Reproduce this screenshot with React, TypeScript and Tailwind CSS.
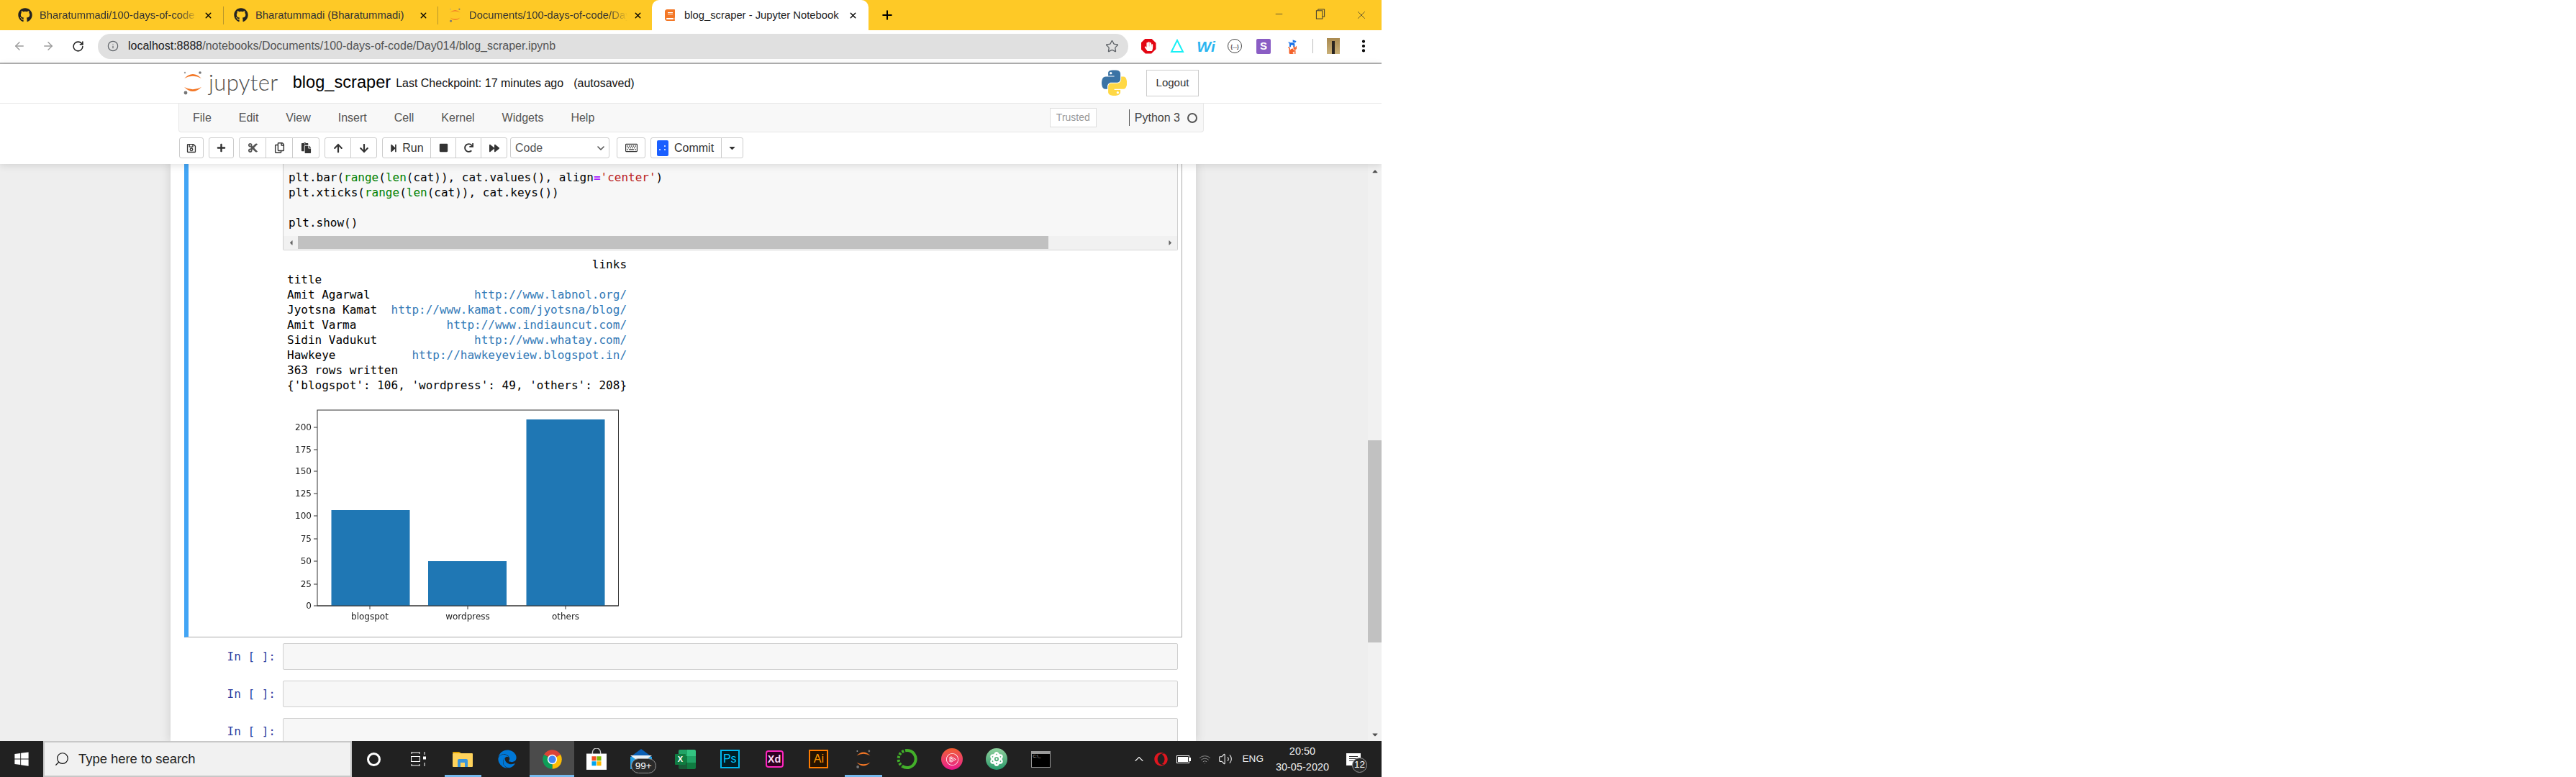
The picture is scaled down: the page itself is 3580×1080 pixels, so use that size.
import React from 'react';
import {
  ArrowLeft,
  ArrowRight,
  RotateCw,
  Info,
  Star,
  EllipsisVertical,
  Plus,
  Minus,
  X,
  Search,
  ChevronUp,
  ChevronDown,
  Wifi,
  Volume2,
} from 'lucide-react';
import {
  FaGithub,
  FaRegSave,
  FaPlus,
  FaCut,
  FaRegCopy,
  FaPaste,
  FaArrowUp,
  FaArrowDown,
  FaStepForward,
  FaStop,
  FaRedo,
  FaForward,
  FaRegKeyboard,
  FaCaretDown,
  FaWindows,
  FaEdge,
  FaOpera,
  FaHandPaper,
  FaCat,
  FaDog,
  FaAtom,
  FaBook,
  FaCaretUp,
  FaCaretLeft,
  FaCaretRight,
} from 'react-icons/fa';
import { SiPluralsight } from 'react-icons/si';

const mono = "[font-family:'DejaVu_Sans_Mono',monospace]";

function JupyterLogo({ className }: { className?: string }) {
  return (
    <svg viewBox="0 0 28 34" className={className}>
      <path d="M2 11 Q14 -1 26 11 Q14 4.5 2 11Z" fill="#f37726" />
      <path d="M2 23 Q14 35 26 23 Q14 29.5 2 23Z" fill="#f37726" />
      <circle cx="24" cy="3" r="1.8" fill="#767677" />
      <circle cx="4" cy="31" r="2.4" fill="#767677" />
      <circle cx="3" cy="3" r="1.2" fill="#9e9e9e" />
    </svg>
  );
}

function PythonLogo() {
  return (
    <svg viewBox="0 0 110.4 110.4" className="h-[36px] w-[35px]">
      <path
        fill="#3a73a5"
        d="M54.919 0c-4.584.022-8.961.413-12.813 1.095C30.76 3.099 28.7 7.295 28.7 15.032v10.219h26.813v3.406H18.638c-7.793 0-14.616 4.684-16.75 13.594-2.462 10.213-2.571 16.586 0 27.25 1.905 7.938 6.457 13.594 14.25 13.594h9.219v-12.25c0-8.85 7.657-16.656 16.75-16.656h26.782c7.454 0 13.406-6.138 13.406-13.625v-25.532c0-7.266-6.13-12.725-13.406-13.937C64.282.328 59.502-.02 54.918 0zm-14.5 8.22c2.77 0 5.031 2.298 5.031 5.125 0 2.816-2.262 5.093-5.031 5.093-2.78 0-5.031-2.277-5.031-5.093 0-2.827 2.251-5.125 5.03-5.125z"
      />
      <path
        fill="#ffd845"
        d="M85.638 28.657v11.906c0 9.231-7.826 17-16.75 17H42.106c-7.336 0-13.406 6.279-13.406 13.625v25.531c0 7.267 6.319 11.54 13.406 13.625 8.488 2.496 16.627 2.947 26.782 0 6.75-1.954 13.406-5.888 13.406-13.625V86.5H55.513v-3.405H95.7c7.793 0 10.696-5.436 13.406-13.594 2.8-8.399 2.68-16.476 0-27.25-1.925-7.758-5.604-13.594-13.406-13.594zM70.575 93.313c2.78 0 5.031 2.278 5.031 5.094 0 2.827-2.251 5.125-5.031 5.125-2.77 0-5.031-2.298-5.031-5.125 0-2.816 2.261-5.094 5.031-5.094z"
      />
    </svg>
  );
}

function ChromeLogo() {
  return (
    <svg viewBox="0 0 48 48" className="h-[29px] w-[29px]">
      <path d="M24 24 L4.95 13 A22 22 0 0 1 43.05 13Z" fill="#db4437" />
      <path d="M24 24 L43.05 13 A22 22 0 0 1 24 46Z" fill="#fbbc05" />
      <path d="M24 24 L24 46 A22 22 0 0 1 4.95 13Z" fill="#0f9d58" />
      <circle cx="24" cy="24" r="11" fill="#fff" />
      <circle cx="24" cy="24" r="8.5" fill="#4285f4" />
    </svg>
  );
}

function Tab({
  title,
  icon,
  className,
  titleClass,
}: {
  title: string;
  icon: React.ReactNode;
  className: string;
  titleClass?: string;
}) {
  return (
    <div className={`flex h-full items-center ${className}`}>
      {icon}
      <span className={`min-w-0 flex-1 overflow-hidden whitespace-nowrap text-[14.8px] ${titleClass ?? ''}`}>{title}</span>
      <X size={13} strokeWidth={2.6} className="ml-[8px] shrink-0 text-black" />
    </div>
  );
}

function TabBar() {
  const fade = '[mask-image:linear-gradient(to_right,black_88%,transparent)] text-[#333]';
  return (
    <div className="flex h-[42px] items-center bg-[#fec926]">
      <Tab
        title="Bharatummadi/100-days-of-code"
        icon={<FaGithub size={20} className="mr-[10px] shrink-0 text-[#222]" />}
        className="w-[310px] pl-[25px] pr-[14px]"
        titleClass={fade}
      />
      <div className="h-[25px] w-px bg-[#b8962a]" />
      <Tab
        title="Bharatummadi (Bharatummadi)"
        icon={<FaGithub size={20} className="mr-[10px] shrink-0 text-[#222]" />}
        className="w-[297px] pl-[14px] pr-[13px]"
        titleClass="text-[#333]"
      />
      <div className="h-[25px] w-px bg-[#b8962a]" />
      <Tab
        title="Documents/100-days-of-code/Day014/"
        icon={<JupyterLogo className="mr-[9px] h-[20px] w-[21px] shrink-0" />}
        className="w-[297px] pl-[13px] pr-[13px]"
        titleClass={fade}
      />
      <Tab
        title="blog_scraper - Jupyter Notebook"
        icon={<FaBook size={16} className="mr-[12px] shrink-0 text-[#f37726]" />}
        className="w-[301px] rounded-t-[10px] bg-white pl-[17px] pr-[15px]"
        titleClass="text-[#222]"
      />
      <Plus size={20} strokeWidth={2.4} className="ml-[16px] text-black" />
      <div className="ml-auto flex">
        <div className="flex w-[57px] justify-center">
          <Minus size={15} strokeWidth={1.2} className="text-[#333]" />
        </div>
        <div className="flex w-[57px] justify-center">
          <svg viewBox="0 0 14 16" className="h-[15px] w-[14px]" fill="none" stroke="#333" strokeWidth="1">
            <rect x="1" y="3" width="9" height="12" />
            <path d="M3.5 3V1H13V12H10" />
          </svg>
        </div>
        <div className="flex w-[57px] justify-center">
          <X size={18} strokeWidth={1} className="text-[#333]" />
        </div>
      </div>
    </div>
  );
}

function AddressBar() {
  return (
    <div className="flex h-[47px] items-center border-b-2 border-[#b2b2b2] bg-white pb-[1px] pl-[7px]">
      <div className="flex w-[40px] justify-center">
        <ArrowLeft size={18} strokeWidth={1.8} className="text-[#9a9a9a]" />
      </div>
      <div className="flex w-[40px] justify-center">
        <ArrowRight size={18} strokeWidth={1.8} className="text-[#9a9a9a]" />
      </div>
      <div className="ml-px flex w-[40px] justify-center">
        <RotateCw size={17} strokeWidth={2.2} className="text-[#222]" />
      </div>
      <div className="ml-[8px] flex h-[35px] w-[1432px] items-center rounded-full bg-[#e0e0e0] pl-[13px] pr-[13px]">
        <Info size={16} strokeWidth={1.8} className="text-[#5f6368]" />
        <span className="ml-[13px] text-[16px] text-[#555]">
          <span className="text-[#222]">localhost:8888</span>/notebooks/Documents/100-days-of-code/Day014/blog_scraper.ipynb
        </span>
        <Star size={19} strokeWidth={1.7} className="ml-auto text-[#5f6368]" />
      </div>
      <div className="ml-[8px] flex w-[40px] justify-center">
        <div className="flex h-[21px] w-[21px] items-center justify-center bg-[#e30613] [clip-path:polygon(30%_0,70%_0,100%_30%,100%_70%,70%_100%,30%_100%,0_70%,0_30%)]">
          <FaHandPaper size={13} className="text-white" />
        </div>
      </div>
      <div className="flex w-[40px] justify-center">
        <svg viewBox="0 0 20 20" className="h-[20px] w-[20px]" fill="none" stroke="#19f0f5" strokeWidth="2">
          <path d="M10 2 L18 18 H2Z" />
        </svg>
      </div>
      <div className="flex w-[40px] justify-center">
        <span className="text-[21px] font-bold italic leading-none text-[#2bb5f0]">Wi</span>
      </div>
      <div className="flex w-[40px] justify-center">
        <div className="flex h-[20px] w-[20px] items-center justify-center rounded-full border-[1.5px] border-[#444] text-[7px] font-bold leading-none text-[#444]">
          {'{...}'}
        </div>
      </div>
      <div className="flex w-[40px] justify-center">
        <div className="flex h-[21px] w-[20px] items-center justify-center rounded-[2px] bg-[#8a5dc4] text-[15px] font-bold text-white">S</div>
      </div>
      <div className="flex w-[40px] justify-center">
        <div className="flex h-[21px] w-[19px] flex-col items-center">
          <FaDog size={12} className="text-[#1a73e8]" />
          <FaCat size={12} className="-mt-[3px] text-[#f4622a]" />
        </div>
      </div>
      <div className="ml-[8px] h-[20px] w-px bg-[#bbb]" />
      <div className="ml-[19px] flex h-[22px] w-[18px] items-end justify-center bg-gradient-to-b from-[#a98a50] to-[#c9b078]">
        <div className="h-[18px] w-[4px] bg-[#2a2520]" />
      </div>
      <EllipsisVertical size={22} strokeWidth={2.6} className="ml-[22px] text-black" />
    </div>
  );
}

function TbButton({
  children,
  className,
  align = 'justify-center',
}: {
  children: React.ReactNode;
  className: string;
  align?: string;
}) {
  return <div className={`flex h-[29px] items-center border border-[#ccc] bg-white text-[#333] ${align} ${className}`}>{children}</div>;
}

function Header() {
  const menus = ['File', 'Edit', 'View', 'Insert', 'Cell', 'Kernel', 'Widgets', 'Help'];
  return (
    <div className="relative z-10 bg-white shadow-[0_2px_10px_rgba(0,0,0,0.12)]">
      <div className="flex h-[55px] items-center justify-between border-b border-[#e7e7e7] pb-[2px] pl-[254px] pr-[254px]">
        <div className="flex items-center">
          <JupyterLogo className="h-[34px] w-[28px]" />
          <span className="ml-[8px] text-[31px] font-light leading-none tracking-[0.4px] text-[#4e4e4e] [font-family:'Lato',sans-serif]">jupyter</span>
          <span className="ml-[20px] text-[23.6px] text-black">blog_scraper</span>
          <span className="ml-[7px] mt-[2px] text-[16px] text-[#111]">Last Checkpoint: 17 minutes ago</span>
          <span className="ml-[14px] mt-[2px] text-[16px] text-[#111]">(autosaved)</span>
        </div>
        <div className="flex items-center">
          <PythonLogo />
          <div className="ml-[27px] flex h-[37px] w-[73px] items-center justify-center border border-[#ccc] text-[15px] text-[#333]">Logout</div>
        </div>
      </div>
      <div className="ml-[248px] flex h-[40px] w-[1425px] items-center rounded-b-[4px] border-x border-b border-[#e7e7e7] bg-[#f8f8f8] pl-[19px] pr-[8px] text-[16px] text-[#555]">
        <div className="flex gap-[38px]">
          {menus.map((m) => (
            <span key={m}>{m}</span>
          ))}
        </div>
        <div className="ml-auto flex h-[27px] w-[65px] items-center justify-center border border-[#ddd] bg-white text-[14px] text-[#999]">Trusted</div>
        <div className="ml-[45px] h-[23px] w-px bg-[#555]" />
        <span className="ml-[7px] text-[#444]">Python 3</span>
        <div className="ml-[10px] h-[14px] w-[14px] rounded-full border-2 border-[#555]" />
      </div>
      <div className="flex pb-[8px] pl-[249px] pt-[7px]">
        <TbButton className="w-[34px] rounded-[3px]">
          <FaRegSave size={14} />
        </TbButton>
        <TbButton className="ml-[7px] w-[35px] rounded-[3px]">
          <FaPlus size={13} />
        </TbButton>
        <div className="ml-[7px] flex">
          <TbButton className="w-[38px] rounded-l-[3px]">
            <FaCut size={15} className="text-[#555]" />
          </TbButton>
          <TbButton className="-ml-px w-[38px]">
            <FaRegCopy size={15} />
          </TbButton>
          <TbButton className="-ml-px w-[38px] rounded-r-[3px]">
            <FaPaste size={15} />
          </TbButton>
        </div>
        <div className="ml-[7px] flex">
          <TbButton className="w-[37px] rounded-l-[3px]">
            <FaArrowUp size={14} />
          </TbButton>
          <TbButton className="-ml-px w-[37px] rounded-r-[3px]">
            <FaArrowDown size={14} />
          </TbButton>
        </div>
        <div className="ml-[7px] flex">
          <TbButton className="w-[68px] gap-[6px] rounded-l-[3px] text-[16px]">
            <FaStepForward size={12} />
            Run
          </TbButton>
          <TbButton className="-ml-px w-[36px]">
            <FaStop size={13} />
          </TbButton>
          <TbButton className="-ml-px w-[36px]">
            <FaRedo size={13} />
          </TbButton>
          <TbButton className="-ml-px w-[37px] rounded-r-[3px]">
            <FaForward size={14} />
          </TbButton>
        </div>
        <TbButton align="justify-between" className="ml-[4px] w-[138px] rounded-[3px] pl-[6px] pr-[3px]">
          <span className="text-[16px] text-[#555]">Code</span>
          <ChevronDown size={16} strokeWidth={2.4} className="text-[#555]" />
        </TbButton>
        <TbButton className="ml-[10px] w-[40px] rounded-[3px]">
          <FaRegKeyboard size={17} />
        </TbButton>
        <TbButton align="justify-start" className="ml-[7px] w-[99px] rounded-l-[3px] pl-[8px] text-[16px]">
          <div className="grid h-[22px] w-[16px] grid-cols-2 content-center gap-[3px] rounded-[2px] bg-[#1a5fff] px-[3px]">
            <span className="col-start-2 h-[2px] w-[2px] rounded-full bg-white" />
            <span className="h-[2px] w-[2px] rounded-full bg-white" />
            <span className="h-[2px] w-[2px] rounded-full bg-white" />
          </div>
          <span className="ml-[8px]">Commit</span>
        </TbButton>
        <TbButton className="-ml-px w-[31px] rounded-r-[3px]">
          <FaCaretDown size={13} />
        </TbButton>
      </div>
    </div>
  );
}

function BarChart() {
  const yTicks = [
    ['200', 34],
    ['175', 65],
    ['150', 95],
    ['125', 126],
    ['100', 157],
    ['75', 189],
    ['50', 220],
    ['25', 252],
    ['0', 282],
  ] as const;
  const bars = [
    { x: 61.5, y: 149, label: 'blogspot', tx: 115 },
    { x: 196, y: 220, label: 'wordpress', tx: 251 },
    { x: 332.5, y: 23, label: 'others', tx: 387 },
  ];
  return (
    <svg viewBox="0 0 480 310" className="block h-[310px] w-[480px] blur-[0.3px]">
      <rect x="42" y="10" width="418.5" height="272" fill="#fff" stroke="#333" strokeWidth="1" />
      {bars.map((b) => (
        <g key={b.label}>
          <rect x={b.x} y={b.y} width="109" height={282 - b.y} fill="#1f77b4" />
          <line x1={b.tx} x2={b.tx} y1="282" y2="287" stroke="#333" />
          <text x={b.tx} y="301" textAnchor="middle" fontSize="12" fontFamily="DejaVu Sans" fill="#222">
            {b.label}
          </text>
        </g>
      ))}
      <line x1="42" x2="460.5" y1="282" y2="282" stroke="#333" strokeWidth="1.2" />
      {yTicks.map(([label, y]) => (
        <g key={label}>
          <line x1="37" x2="42" y1={y} y2={y} stroke="#333" />
          <text x="34" y={y + 4} textAnchor="end" fontSize="12" fontFamily="DejaVu Sans" fill="#222">
            {label}
          </text>
        </g>
      ))}
    </svg>
  );
}

function CodeCell() {
  const green = 'text-[#008000]';
  return (
    <div className="border-b border-l-[6px] border-r border-b-[#ababab] border-l-[#42a5f5] border-r-[#ababab]">
      <div className="ml-[131px] mr-[5px] h-[120px] rounded-b-[2px] border-x border-b border-[#cfcfcf] bg-[#f7f7f7]">
        <pre className={`h-[92px] pl-[7px] pt-[8px] text-[16px] leading-[21px] text-black ${mono}`}>
          plt.bar(<span className={green}>range</span>(<span className={green}>len</span>(cat)), cat.values(), align
          <span className="font-bold text-[#aa22ff]">=</span>
          <span className="text-[#ba2121]">'center'</span>){'\n'}
          plt.xticks(<span className={green}>range</span>(<span className={green}>len</span>(cat)), cat.keys()){'\n\n'}
          plt.show()
        </pre>
        <div className="mt-[8px] flex h-[18px] items-center bg-[#f1f1f1] text-[#666]">
          <div className="flex w-[20px] justify-center">
            <FaCaretLeft size={11} />
          </div>
          <div className="h-full w-[1043px] bg-[#c1c1c1]" />
          <div className="ml-auto flex w-[20px] justify-center">
            <FaCaretRight size={11} />
          </div>
        </div>
      </div>
      <div className="pb-[15px] pl-[137px] pt-[9px]">
        <pre className={`text-[16px] leading-[21px] text-black ${mono}`}>
          {'                                            links\ntitle\nAmit Agarwal               '}
          <span className="text-[#337ab7]">http://www.labnol.org/</span>
          {'\nJyotsna Kamat  '}
          <span className="text-[#337ab7]">http://www.kamat.com/jyotsna/blog/</span>
          {'\nAmit Varma             '}
          <span className="text-[#337ab7]">http://www.indiauncut.com/</span>
          {'\nSidin Vadukut              '}
          <span className="text-[#337ab7]">http://www.whatay.com/</span>
          {'\nHawkeye           '}
          <span className="text-[#337ab7]">http://hawkeyeview.blogspot.in/</span>
          {"\n363 rows written\n{'blogspot': 106, 'wordpress': 49, 'others': 208}"}
        </pre>
        <div className="mt-[14px]">
          <BarChart />
        </div>
      </div>
    </div>
  );
}

function EmptyCell() {
  return (
    <div className="mb-[15px] flex">
      <div className={`w-[127px] pt-[8px] text-right text-[16px] leading-[21px] text-[#303f9f] ${mono}`}>In [ ]:</div>
      <div className="ml-[10px] mr-[6px] h-[37px] flex-1 rounded-[2px] border border-[#cfcfcf] bg-[#f7f7f7]" />
    </div>
  );
}

function Main() {
  return (
    <div className="flex min-h-0 flex-1 overflow-hidden bg-[#eeeeee]">
      <div className="ml-[237px] w-[1425px] bg-white px-[19px] shadow-[0_0_12px_1px_rgba(87,87,87,0.2)]">
        <CodeCell />
        <div className="mt-[8px]">
          <EmptyCell />
          <EmptyCell />
          <EmptyCell />
        </div>
      </div>
      <div className="ml-auto flex w-[19px] flex-col bg-[#f1f1f1] text-[#505050]">
        <div className="flex h-[19px] items-center justify-center">
          <FaCaretUp size={12} />
        </div>
        <div className="mt-[365px] h-[281px] bg-[#c1c1c1]" />
        <div className="mt-auto flex h-[19px] items-center justify-center">
          <FaCaretDown size={12} />
        </div>
      </div>
    </div>
  );
}

function TaskApp({ children, underline, active }: { children: React.ReactNode; underline?: boolean; active?: boolean }) {
  return (
    <div className={`relative flex h-full w-[61.8px] shrink-0 items-center justify-center ${active ? 'bg-[#4b4b4b]' : ''}`}>
      {children}
      {underline && <div className="absolute bottom-0 left-[5px] right-[5px] h-[3px] bg-[#76b9ed]" />}
      {active && <div className="absolute bottom-0 left-0 right-0 h-[3px] bg-[#76b9ed]" />}
    </div>
  );
}

function Taskbar() {
  return (
    <div className="flex h-[50px] items-center bg-[#212121] text-[#eee]">
      <div className="flex h-full w-[60px] items-center justify-center">
        <FaWindows size={22} className="text-white" />
      </div>
      <div className="flex h-full w-[429px] items-center border-2 border-[#c8c8c8] bg-[#f1f1f1] pl-[13px]">
        <Search size={22} strokeWidth={1.3} className="-scale-x-100 text-[#111]" />
        <span className="ml-[12px] text-[18.4px] text-[#222]">Type here to search</span>
      </div>
      <TaskApp>
        <div className="h-[19px] w-[19px] rounded-full border-[3px] border-white" />
      </TaskApp>
      <TaskApp>
        <svg viewBox="0 0 22 20" className="h-[20px] w-[22px]" fill="none" stroke="#fff" strokeWidth="1">
          <path d="M1 1H12M1 3V0M12 3V0" />
          <rect x="0.5" y="6.5" width="12" height="7" />
          <path d="M1 19H12M1 17V20M12 17V20M19 0V4M19 15V20" />
          <rect x="17.5" y="7" width="3" height="3" fill="#fff" />
        </svg>
      </TaskApp>
      <TaskApp underline>
        <svg viewBox="0 0 28 24" className="h-[24px] w-[28px]">
          <path d="M0 3a1 1 0 0 1 1-1h8l3 2h-12Z" fill="#e0a100" />
          <rect y="4" width="28" height="19" rx="1" fill="#ffd35c" />
          <path d="M7 23V14a2 2 0 0 1 2-2h10a2 2 0 0 1 2 2v9h-4v-6h-6v6Z" fill="#3a96dd" />
        </svg>
      </TaskApp>
      <TaskApp>
        <FaEdge size={26} className="text-[#0078d7]" />
      </TaskApp>
      <TaskApp active>
        <ChromeLogo />
      </TaskApp>
      <TaskApp>
        <svg viewBox="0 0 30 32" className="h-[30px] w-[28px]">
          <path d="M9 9V6a6 6 0 0 1 12 0v3" fill="none" stroke="#ccc" strokeWidth="1.5" />
          <rect y="8" width="30" height="24" fill="#fff" />
          <rect x="8" y="12" width="6.5" height="6.5" fill="#f25022" />
          <rect x="15.5" y="12" width="6.5" height="6.5" fill="#7fba00" />
          <rect x="8" y="19.5" width="6.5" height="6.5" fill="#00a4ef" />
          <rect x="15.5" y="19.5" width="6.5" height="6.5" fill="#ffb900" />
        </svg>
      </TaskApp>
      <TaskApp>
        <svg viewBox="0 0 30 28" className="h-[28px] w-[30px]">
          <path d="M0 11 L15 0 L30 11Z" fill="#0a5fb4" />
          <rect y="11" width="30" height="17" fill="#1fa0e8" />
          <path d="M0 9 H30 L15 20Z" fill="#e8f0f5" />
        </svg>
        <div className="absolute left-[17px] top-[24px] flex h-[21px] w-[35px] items-center justify-center rounded-full border border-[#999] bg-[#2a2a2a] text-[13.5px] leading-none text-white">
          99+
        </div>
      </TaskApp>
      <TaskApp>
        <div className="relative h-[27px] w-[29px]">
          <div className="ml-[5px] grid h-full grid-cols-2 grid-rows-3 overflow-hidden rounded-[2px]">
            <div className="bg-[#21a366]" />
            <div className="bg-[#33c481]" />
            <div className="bg-[#107c41]" />
            <div className="bg-[#21a366]" />
            <div className="bg-[#185c37]" />
            <div className="bg-[#107c41]" />
          </div>
          <div className="absolute left-0 top-[6px] flex h-[15px] w-[15px] items-center justify-center rounded-[1px] bg-[#107c41] text-[11px] font-bold leading-none text-white">
            X
          </div>
        </div>
      </TaskApp>
      <TaskApp>
        <div className="flex h-[26px] w-[27px] items-center justify-center border-2 border-[#00b7ee] bg-[#001d26] text-[16px] leading-none text-[#00c8ff]">Ps</div>
      </TaskApp>
      <TaskApp>
        <div className="flex h-[24px] w-[25px] items-center justify-center rounded-[4px] border-2 border-[#ff26be] bg-[#2e001f] text-[14.5px] font-bold leading-none text-[#ffd9f2]">Xd</div>
      </TaskApp>
      <TaskApp>
        <div className="flex h-[26px] w-[27px] items-center justify-center border-2 border-[#ff7c00] bg-[#261300] text-[16px] leading-none text-[#ff9a00]">Ai</div>
      </TaskApp>
      <TaskApp underline>
        <JupyterLogo className="h-[28px] w-[22px]" />
      </TaskApp>
      <TaskApp>
        <svg viewBox="0 0 30 30" className="h-[30px] w-[30px]" fill="none">
          <path d="M15 3 A12 12 0 1 1 8 25" stroke="#43b02a" strokeWidth="4" />
          <path d="M15 3 A12 12 0 0 0 8 25" stroke="#43b02a" strokeWidth="4" strokeDasharray="3 2" />
        </svg>
      </TaskApp>
      <TaskApp>
        <div className="flex h-[30px] w-[30px] items-center justify-center rounded-full bg-gradient-to-b from-[#f15b2a] to-[#e80a89]">
          <SiPluralsight size={17} className="text-white" />
        </div>
      </TaskApp>
      <TaskApp>
        <div className="flex h-[30px] w-[30px] items-center justify-center rounded-full bg-gradient-to-b from-[#8fd19e] to-[#1f9a6b]">
          <FaAtom size={20} className="text-white" />
        </div>
      </TaskApp>
      <TaskApp>
        <div className="h-[23px] w-[27px] border border-t-[4px] border-[#999] bg-black pl-[1px] text-[6px] leading-[7px] text-[#ccc]">C:\_</div>
      </TaskApp>
      <div className="ml-auto flex h-full items-center pr-[9px]">
        <ChevronUp size={20} strokeWidth={1.4} className="mr-[11px] text-[#eee]" />
        <FaOpera size={19} className="mr-[12px] text-[#e0161f]" />
        <div className="mr-[11px] flex items-center">
          <div className="h-[11px] w-[18px] border border-white p-[1px]">
            <div className="h-full w-full bg-white" />
          </div>
          <div className="h-[5px] w-[2px] bg-white" />
        </div>
        <Wifi size={17} strokeWidth={1.4} className="mr-[10px] text-[#8a8a8a]" />
        <Volume2 size={20} strokeWidth={1.3} className="mr-[14px] text-[#eee]" />
        <span className="text-[13.6px]">ENG</span>
        <div className="ml-[16px] flex w-[76px] flex-col items-center text-[14.5px] leading-[22px]">
          <span>20:50</span>
          <span>30-05-2020</span>
        </div>
        <div className="relative ml-[23px] mr-[20px] h-[17px] w-[20px] bg-white pt-[4px]">
          <div className="mx-[4px] h-px bg-[#333]" />
          <div className="mx-[4px] mt-[2px] h-px bg-[#333]" />
          <div className="mx-[4px] mt-[2px] h-px bg-[#333]" />
          <div className="absolute left-[8px] top-[6px] flex h-[21px] w-[21px] items-center justify-center rounded-full border border-[#999] bg-[#2a2a2a] text-[13.5px] leading-none text-white">
            12
          </div>
        </div>
      </div>
    </div>
  );
}

export default function App() {
  return (
    <div className="flex h-[1080px] w-[1920px] flex-col overflow-hidden [font-family:'Liberation_Sans',Arial,sans-serif]">
      <TabBar />
      <AddressBar />
      <Header />
      <Main />
      <Taskbar />
    </div>
  );
}
